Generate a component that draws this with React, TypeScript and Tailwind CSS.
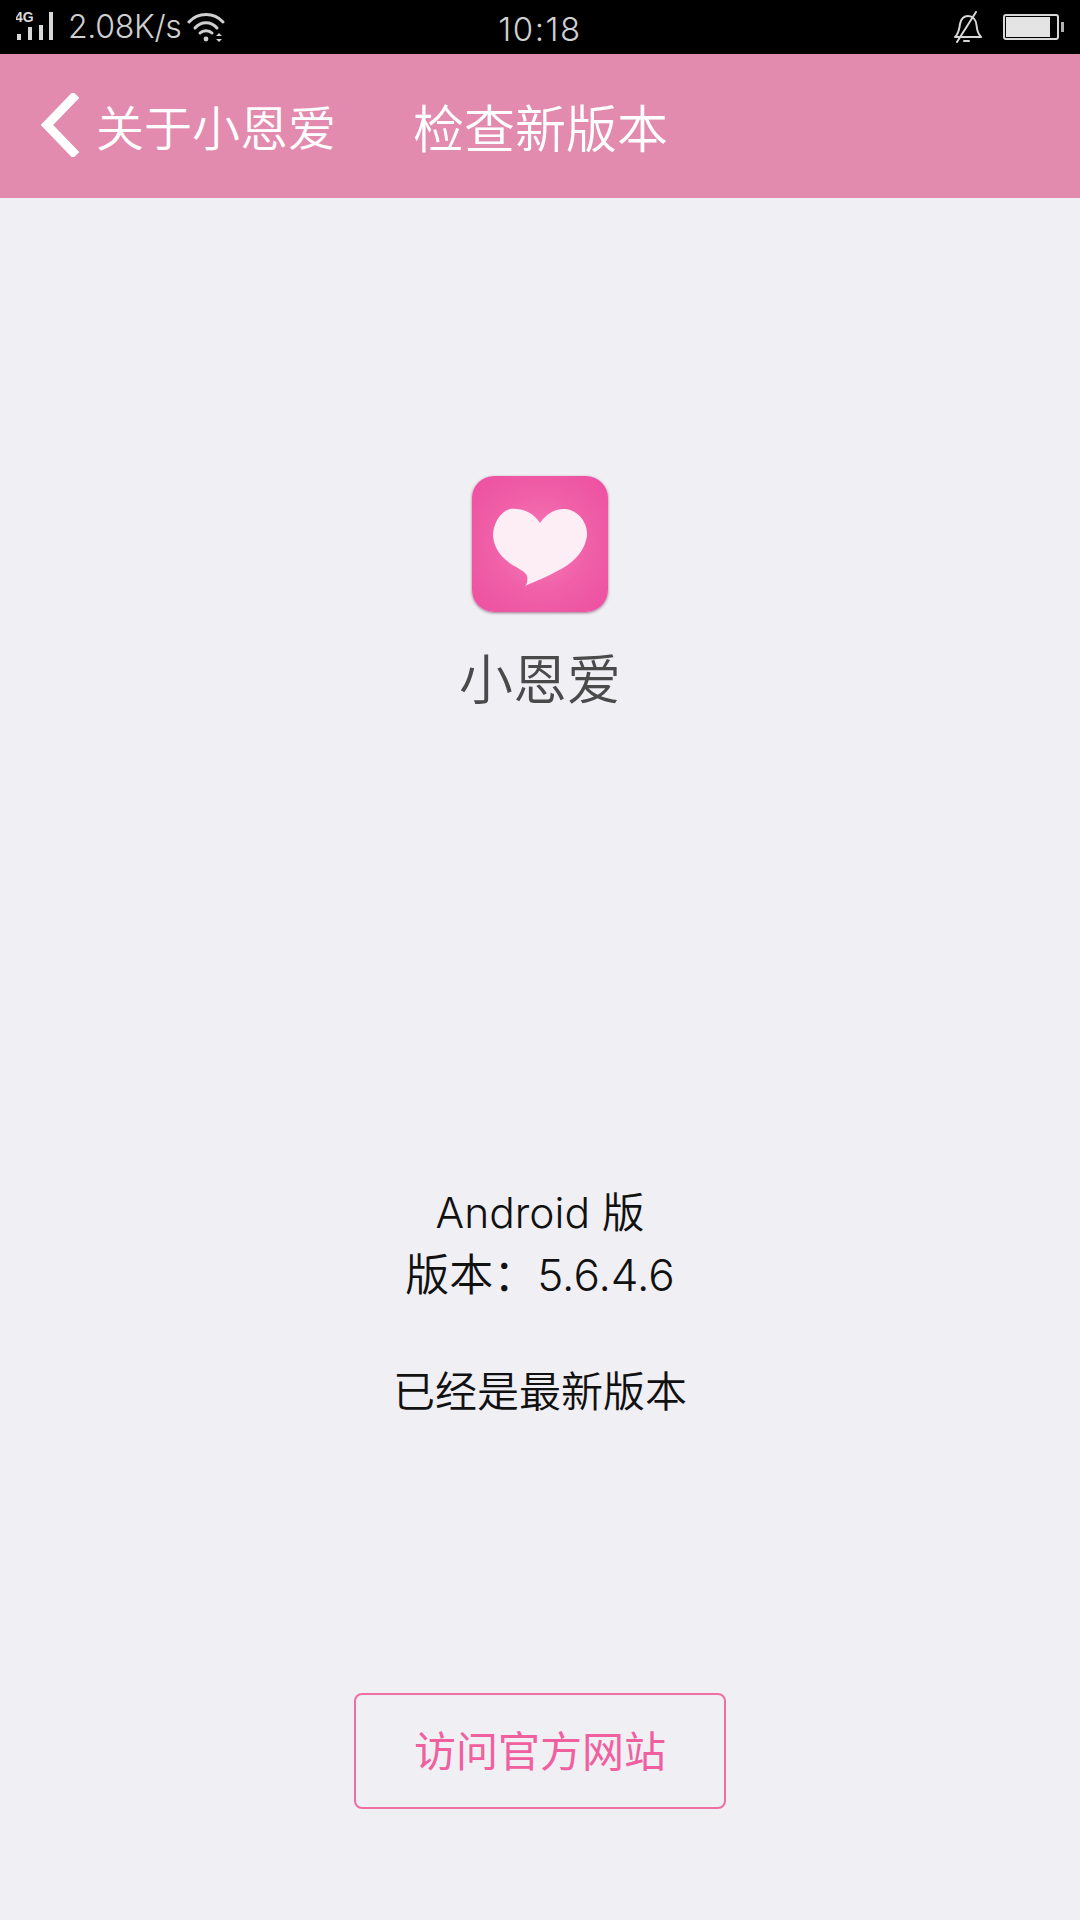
import React from "react";

const font = { fontFamily: '"Inter","Noto Sans CJK SC",sans-serif' };

function StatusBar() {
  return (
    <div className="relative flex h-[54px] items-center justify-between bg-black pl-[16px] pr-[16px] text-[#d0d0d0]">
      <div className="flex items-center">
        <svg width="40" height="32" viewBox="0 0 40 32" className="mt-[-2px]">
          <text x="-1" y="12" fontSize="14" fontWeight="700" fill="#d8d8d8" fontFamily="Liberation Sans">4G</text>
          <rect x="1" y="24" width="4" height="6" fill="#d8d8d8" />
          <rect x="12" y="17" width="4" height="13" fill="#d8d8d8" />
          <rect x="23" y="15" width="4" height="15" fill="#d8d8d8" />
          <rect x="33" y="2" width="4" height="28" fill="#d8d8d8" />
        </svg>
        <span className="ml-[12px] text-[32px] leading-none tracking-[-0.3px] font-[300]">2.08K/s</span>
        <svg width="40" height="30" viewBox="0 0 40 30" className="ml-[6px]" fill="none" stroke="#d0d0d0" strokeWidth="3" strokeLinecap="round">
          <path d="M2 10C11 0 27 0 36 10" />
          <path d="M8 16C14 9 24 9 30 16" />
          <path d="M13 21C16 18 22 18 25 21" />
          <circle cx="19" cy="27" r="2.400" fill="#d0d0d0" stroke="none" />
          <path d="M29 24l3-3 3 3zM29 27l3 3 3-3z" fill="#d0d0d0" stroke="none" />
        </svg>
      </div>
      <span className="absolute left-1/2 top-[9px] -translate-x-1/2 text-[33px] leading-[40px] tracking-[1.5px] font-[300]">10:18</span>
      <div className="flex items-center">
        <svg width="30" height="32" viewBox="0 0 30 32" fill="none" stroke="#d8d8d8" strokeWidth="2" strokeLinecap="round" strokeLinejoin="round">
          <path d="M3 26C7 22 7 19 8 13 9 8 12 5 16 5 21 5 24 9 24.500 14 25 20 26 23 29 26Z" />
          <path d="M24 1 5 31" />
          <path d="M12 30h5" />
        </svg>
        <div className="ml-[21px] flex items-center">
          <div className="flex h-[26px] w-[56px] items-center rounded-[3px] border-2 border-[#d8d8d8] p-[1px]">
            <div className="h-full w-[44px] bg-[#e4e4e4]" />
          </div>
          <div className="ml-[2px] h-[10px] w-[3px] bg-[#b0b0b0]" />
        </div>
      </div>
    </div>
  );
}

function Header() {
  return (
    <div className="flex h-[144px] items-center bg-[#e38bae] text-white">
      <svg width="38" height="64" viewBox="0 0 38 64" className="ml-[41px] mt-[-2px]" fill="none" stroke="#fff" strokeWidth="9" strokeLinecap="square" strokeLinejoin="miter">
        <path d="M32 5 6 32 32 59" />
      </svg>
      <span className="ml-[17px] mt-[6px] w-[238px] text-[48px] leading-none whitespace-nowrap font-[350]">关于小恩爱</span>
      <span className="ml-[79px] mt-[6px] text-[51px] leading-none whitespace-nowrap font-[350]">检查新版本</span>
    </div>
  );
}

function AppIcon() {
  return (
    <div className="h-[136px] w-[136px] rounded-[22px] bg-[radial-gradient(circle,#f97cba_0%,#f060a8_50%,#ec4fa0_100%)] shadow-[0_1px_3px_rgba(90,40,70,0.6)]">
      <svg width="136" height="136" viewBox="0 0 136 136">
        <path
          d="M68 47C61 36 49 32 38 33 27 36 21 49 21 60 22 72 29 81 39 88 45 92 53 95 55 100 56 104 55 108 53 110 64 105 77 100 91 92 103 85 113 74 115 60 116 47 107 35 94 33 83 32 74 38 68 47Z"
          fill="#fdeef5"
        />
      </svg>
    </div>
  );
}

export default function App() {
  return (
    <div className="flex h-[1920px] w-[1080px] flex-col bg-[#f0eff4]" style={font}>
      <StatusBar />
      <Header />
      <div className="flex flex-1 flex-col items-center">
        <div className="mt-[278px]">
          <AppIcon />
        </div>
        <div className="mt-[34px] text-[54px] leading-[70px] text-[#4a4a4a] font-[350]">小恩爱</div>
        <div className="mt-[466px] text-center leading-[62px] text-[#111] font-[350]">
          <div className="text-[42.500px]">Android 版</div>
          <div className="text-[44px]">版本：5.6.4.6</div>
        </div>
        <div className="mt-[58px] text-[42px] leading-[56px] text-[#111] font-[350]">已经是最新版本</div>
        <button className="mt-[273px] flex h-[116px] w-[372px] items-center justify-center rounded-[8px] border-2 border-[#ee6fa3] text-[42px] text-[#f0609f] font-[400]">
          访问官方网站
        </button>
      </div>
    </div>
  );
}
